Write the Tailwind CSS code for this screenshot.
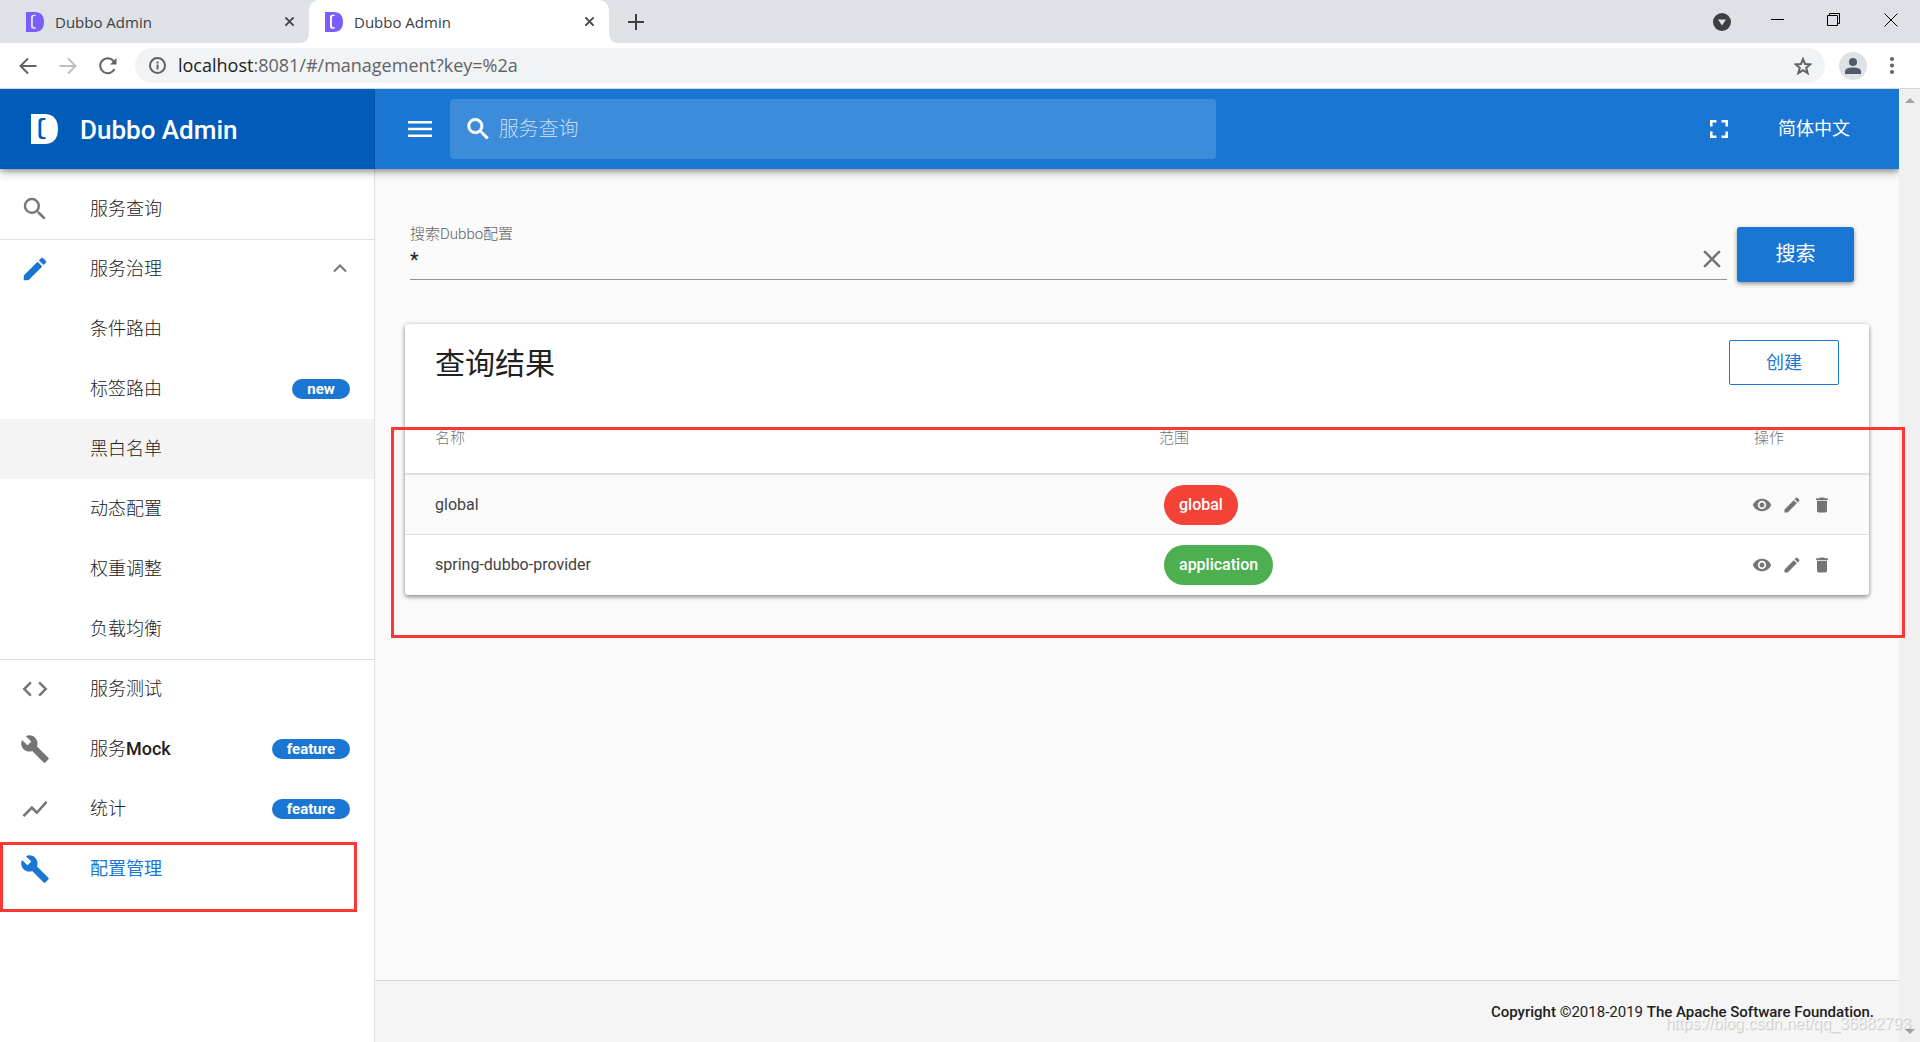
<!DOCTYPE html>
<html lang="zh-CN">
<head>
<meta charset="utf-8">
<title>Dubbo Admin</title>
<script src="https://cdn.jsdelivr.net/npm/@tailwindcss/browser@4"></script>
</head>
<body class="flex h-screen flex-col overflow-hidden bg-[#fafafa] font-['Roboto','Noto_Sans_CJK_SC',sans-serif] text-[#212121]">
<svg class="hidden">
  <symbol id="dubbo" viewBox="0 0 27 30"><path fill-rule="evenodd" d="M0 0H13C23 0 27 6 27 15S23 30 13 30H0ZM14.500 4H11Q7.500 4 7.500 8V21Q7.500 25 11 25H14.500V23H12.500Q10.300 23 10.300 20V9Q10.300 6 12.500 6H14.500Z"/></symbol>
  <symbol id="close" viewBox="0 0 24 24"><path d="M19 6.41L17.59 5 12 10.59 6.41 5 5 6.41 10.59 12 5 17.59 6.41 19 12 13.41 17.59 19 19 17.59 13.41 12z"/></symbol>
  <symbol id="search" viewBox="0 0 24 24"><path d="M15.5 14h-.79l-.28-.27A6.471 6.471 0 0 0 16 9.5 6.5 6.5 0 1 0 9.5 16c1.61 0 3.09-.59 4.23-1.57l.27.28v.79l5 4.99L20.49 19l-4.99-5zm-6 0C7.01 14 5 11.99 5 9.5S7.01 5 9.5 5 14 7.01 14 9.5 11.99 14 9.5 14z"/></symbol>
  <symbol id="edit" viewBox="0 0 24 24"><path d="M3 17.25V21h3.75L17.81 9.94l-3.75-3.75L3 17.25zM20.71 7.04c.39-.39.39-1.02 0-1.41l-2.34-2.34c-.39-.39-1.02-.39-1.41 0l-1.83 1.83 3.75 3.75 1.83-1.83z"/></symbol>
  <symbol id="build" viewBox="0 0 24 24"><path d="M22.7 19l-9.1-9.1c.9-2.3.4-5-1.5-6.9-2-2-5-2.4-7.4-1.3L9 6 6 9 1.6 4.7C.4 7.1.9 10.1 2.9 12.1c1.9 1.9 4.6 2.4 6.9 1.5l9.1 9.1c.4.4 1 .4 1.4 0l2.3-2.3c.5-.4.5-1.1.1-1.4z"/></symbol>
  <symbol id="eye" viewBox="0 0 24 24"><path d="M12 4.5C7 4.5 2.73 7.61 1 12c1.73 4.39 6 7.5 11 7.5s9.27-3.11 11-7.5c-1.73-4.39-6-7.5-11-7.5zM12 17c-2.76 0-5-2.24-5-5s2.24-5 5-5 5 2.24 5 5-2.24 5-5 5zm0-8c-1.66 0-3 1.34-3 3s1.34 3 3 3 3-1.34 3-3-1.34-3-3-3z"/></symbol>
  <symbol id="trash" viewBox="0 0 24 24"><path d="M6 19c0 1.1.9 2 2 2h8c1.1 0 2-.9 2-2V7H6v12zM19 4h-3.5l-1-1h-5l-1 1H5v2h14V4z"/></symbol>
</svg>

<!-- Browser tabs -->
<div class="flex h-[43px] shrink-0 items-center bg-[#dee1e6] font-['Open_Sans',sans-serif] text-[15px] text-[#3c4043]">
  <div class="flex h-full w-[309px] items-center pl-[26px] pr-3">
    <svg class="h-5 w-[18px] fill-[#7b5cff]"><use href="#dubbo"/></svg>
    <span class="ml-[11px] flex-1 pt-px">Dubbo Admin</span>
    <button aria-label="关闭"><svg class="size-[15px] fill-[#3c4043] stroke-[#3c4043]"><use href="#close"/></svg></button>
  </div>
  <div class="relative flex h-full w-[300px] items-center rounded-t-[10px] bg-white pl-4 pr-3">
    <svg class="absolute -left-[10px] bottom-0 size-[10px] fill-white" viewBox="0 0 10 10"><path d="M10 0V10H0Q10 10 10 0Z"/></svg>
    <svg class="absolute -right-[10px] bottom-0 size-[10px] fill-white" viewBox="0 0 10 10"><path d="M0 0V10H10Q0 10 0 0Z"/></svg>
    <svg class="h-5 w-[18px] fill-[#7b5cff]"><use href="#dubbo"/></svg>
    <span class="ml-[11px] flex-1 pt-px">Dubbo Admin</span>
    <button aria-label="关闭"><svg class="size-[15px] fill-[#3c4043] stroke-[#3c4043]"><use href="#close"/></svg></button>
  </div>
  <button aria-label="新标签页" class="ml-[19px]"><svg class="size-4 stroke-[#3c4043]" viewBox="0 0 16 16" stroke-width="2"><path d="M8 0V16M0 8H16"/></svg></button>
  <div class="ml-auto flex items-center pb-1 pr-[22px]">
    <svg class="mr-10 mt-1 size-[18px]" viewBox="0 0 18 18"><circle cx="9" cy="9" r="9" fill="#3c4043"/><path d="M5 6.500H13L9 12.500Z" fill="#dee1e6"/></svg>
    <svg class="mr-[43px] size-[13px] stroke-black" viewBox="0 0 13 13"><path d="M0 6.500H13"/></svg>
    <svg class="mr-[44px] size-[13px] fill-none stroke-black" viewBox="0 0 13 13"><path d="M.5 2.500H10.500V12.500H.5ZM2.500 2.500V.5H12.500V10.500H10.500"/></svg>
    <svg class="size-[14px] stroke-black" viewBox="0 0 14 14"><path d="M.5 .5L13.500 13.500M13.500 .5L.5 13.500"/></svg>
  </div>
</div>

<!-- Address bar -->
<div class="flex h-[46px] shrink-0 items-center border-b border-[#d5d7da] bg-white pl-[19px] pr-[26px] font-['Open_Sans',sans-serif]">
  <button aria-label="后退"><svg class="size-[18px] fill-none stroke-[#5f6368]" viewBox="0 0 18 18" stroke-width="2"><path d="M17.500 9H2M9 1.500L1.500 9L9 16.500"/></svg></button>
  <button aria-label="前进" class="ml-[22px]"><svg class="size-[18px] fill-none stroke-[#bbbdc0]" viewBox="0 0 18 18" stroke-width="2"><path d="M.5 9H16M9 1.500L16.500 9L9 16.500"/></svg></button>
  <button aria-label="刷新" class="ml-[22px]"><svg class="size-[18px] fill-none stroke-[#5f6368]" viewBox="0 0 18 18" stroke-width="2"><path d="M15.500 12A7.500 7.500 0 1 1 14.500 4L16 5.500"/><path d="M17.500 1V7.500H11Z" fill="#5f6368" stroke="none"/></svg></button>
  <div class="ml-[18px] flex h-[35px] flex-1 items-center rounded-full bg-[#f1f3f4] pl-[14px] pr-[13px]">
    <svg class="size-[17px] fill-none stroke-[#5f6368]" viewBox="0 0 17 17" stroke-width="2"><circle cx="8.500" cy="8.500" r="7.500"/><path d="M8.500 7.500V12.500M8.500 4.500V6.500"/></svg>
    <a href="#" class="ml-3 flex-1 pb-0.5 text-lg leading-6 text-[#5f6368]"><span class="text-[#202124]">localhost</span>:8081/#/management?key=%2a</a>
    <svg class="size-[18px] fill-none stroke-[#5f6368]" viewBox="0 0 18 18" stroke-width="2"><path d="M9 2L11 7L16.500 7.300L12.200 10.800L13.700 16.200L9 13.100L4.300 16.200L5.800 10.800L1.500 7.300L7 7Z"/></svg>
  </div>
  <svg class="ml-[14px] size-7" viewBox="0 0 28 28"><circle cx="14" cy="14" r="14" fill="#dee1e6"/><g fill="#4f5b6b"><circle cx="14" cy="10" r="4"/><path d="M6 22V19.500Q6 15.500 14 15.500T22 19.500V22Z"/></g></svg>
  <svg class="ml-[23px] h-[17px] w-1 fill-[#5f6368]" viewBox="0 0 4 17"><circle cx="2" cy="2" r="2"/><circle cx="2" cy="8.500" r="2"/><circle cx="2" cy="15" r="2"/></svg>
</div>

<div class="flex min-h-0 flex-1">
  <div class="flex min-w-0 flex-1 flex-col overflow-hidden">
    <!-- Application bar -->
    <header class="z-10 flex h-20 shrink-0 bg-[#1976d2] text-white shadow-[0_2px_5px_0_rgba(0,0,0,0.3),0_4px_10px_0_rgba(0,0,0,0.2)]">
      <div class="flex w-[375px] items-center border-r border-[#0052a3] bg-[#005cb7] pl-[31px]">
        <svg class="h-[30px] w-[27px] fill-white"><use href="#dubbo"/></svg>
        <h1 class="ml-[22px] pt-0.5 text-[26px] font-medium">Dubbo Admin</h1>
      </div>
      <div class="flex flex-1 items-center pl-[33px] pr-[49px]">
        <button aria-label="菜单"><svg class="h-4 w-6 fill-white" viewBox="0 0 24 16"><path d="M0 0H24V2.600H0ZM0 6.700H24V9.300H0ZM0 13.400H24V16H0Z"/></svg></button>
        <label class="ml-[18px] flex h-[60px] max-w-[766px] flex-1 items-center rounded bg-white/16 pl-[14px]">
          <svg class="size-[30px] fill-white stroke-white" stroke-width="0.5"><use href="#search"/></svg>
          <input type="text" aria-label="服务查询" placeholder="服务查询" class="ml-[6px] w-full bg-transparent text-xl font-light outline-none placeholder:text-white/70">
        </label>
        <button aria-label="全屏" class="ml-auto"><svg class="size-[18px] fill-white" viewBox="0 0 14 14"><path d="M2 9H0v5h5v-2H2V9zM0 5h2V2h3V0H0v5zm12 7H9v2h5V9h-2v3zM9 0v2h3v3h2V0H9z"/></svg></button>
        <button class="ml-[50px] text-lg">简体中文</button>
      </div>
    </header>

    <div class="flex min-h-0 flex-1">
      <!-- Navigation drawer -->
      <nav class="relative w-[375px] shrink-0 border-r border-[#e0e0e0] bg-white pt-[10px] text-lg font-light">
        <a href="#" class="flex h-[60px] items-center pl-5"><svg class="size-[30px] fill-[#757575]"><use href="#search"/></svg><span class="ml-10">服务查询</span></a>
        <a href="#" class="flex h-[60px] items-center pl-5 pr-5 shadow-[inset_0_1px_0_#e0e0e0]"><svg class="size-[30px] fill-[#1976d2]"><use href="#edit"/></svg><span class="ml-10 flex-1">服务治理</span><svg class="mr-[7px] mb-0.5 h-2 w-[14px] fill-none stroke-[#757575]" viewBox="0 0 14 8" stroke-width="2"><path d="M1 7.500L7 1.500L13 7.500"/></svg></a>
        <a href="#" class="flex h-[60px] items-center pl-[90px]">条件路由</a>
        <a href="#" class="flex h-[60px] items-center justify-between pl-[90px] pr-6">标签路由<span class="flex h-5 w-[58px] items-center justify-center rounded-full bg-[#1976d2] pt-px text-[15px] font-bold text-white">new</span></a>
        <a href="#" class="flex h-[60px] items-center bg-[#f4f4f4] pl-[90px]">黑白名单</a>
        <a href="#" class="flex h-[60px] items-center pl-[90px]">动态配置</a>
        <a href="#" class="flex h-[60px] items-center pl-[90px]">权重调整</a>
        <a href="#" class="flex h-[60px] items-center pl-[90px]">负载均衡</a>
        <a href="#" class="flex h-[60px] items-center pl-5 shadow-[inset_0_1px_0_#e0e0e0]"><svg class="size-[30px] fill-[#757575]" viewBox="0 0 24 24"><path d="M9.400 16.600L4.800 12l4.600-4.600L8 6l-6 6 6 6 1.400-1.400zm5.200 0l4.600-4.600-4.600-4.600L16 6l6 6-6 6-1.400-1.400z"/></svg><span class="ml-10">服务测试</span></a>
        <a href="#" class="flex h-[60px] items-center pl-5 pr-6"><svg class="size-[30px] fill-[#757575]"><use href="#build"/></svg><span class="ml-10 flex-1">服务<span class="font-medium">Mock</span></span><span class="flex h-5 w-[78px] items-center justify-center rounded-full bg-[#1976d2] pt-px text-[15px] font-bold text-white">feature</span></a>
        <a href="#" class="flex h-[60px] items-center pl-5 pr-6"><svg class="size-[30px] fill-[#757575]" viewBox="0 0 24 24"><path d="M3.500 18.490l6-6.010 4 4L22 6.920l-1.410-1.410-7.090 7.970-4-4L2 16.990z"/></svg><span class="ml-10 flex-1">统计</span><span class="flex h-5 w-[78px] items-center justify-center rounded-full bg-[#1976d2] pt-px text-[15px] font-bold text-white">feature</span></a>
        <a href="#" class="relative flex h-[60px] items-center pl-5 font-normal text-[#1976d2]"><svg class="size-[30px] fill-[#1976d2]"><use href="#build"/></svg><span class="ml-10">配置管理</span><span class="absolute -bottom-[13px] left-0 right-[17px] top-[3px] border-3 border-[#fd3636]"></span></a>
      </nav>

      <div class="flex min-w-0 flex-1 flex-col">
        <main class="flex-1 pl-[30px] pr-[30px] pt-[54px]">
          <form class="flex items-start pl-[5px] pr-[15px]">
            <div class="flex h-[57px] flex-1 items-end border-b border-[#949494]">
              <div class="flex flex-1 flex-col">
                <label for="key" class="text-[15px] leading-5 font-light text-[#616161]">搜索Dubbo配置</label>
                <input id="key" type="text" value="*" class="h-[35px] w-full bg-transparent pb-1 text-xl outline-none">
              </div>
              <button type="button" aria-label="清除" class="mb-[5px]"><svg class="size-[30px] fill-[#757575]" viewBox="0 0 24 24"><use href="#close"/></svg></button>
            </div>
            <button type="submit" class="ml-[10px] mt-1 h-[55px] w-[117px] rounded-[3px] bg-[#1976d2] pb-0.5 text-xl text-white shadow-[0_2px_4px_rgba(0,0,0,0.4)]">搜索</button>
          </form>

          <section class="relative mt-[42px] rounded-[3px] bg-white shadow-[0_2px_4px_rgba(0,0,0,0.4),0_0_5px_rgba(0,0,0,0.12)]">
            <div class="flex h-[77px] items-center justify-between pl-[30px] pr-[30px]">
              <h2 class="pt-0.5 text-3xl">查询结果</h2>
              <button class="h-[45px] w-[110px] rounded-[2px] border border-[#1976d2] text-lg text-[#1976d2]">创建</button>
            </div>
            <table class="w-full table-fixed border-separate border-spacing-0 text-left text-base text-[#424242]">
              <thead><tr class="h-[74px] text-[15px] text-[#757575] *:border-b-2 *:border-[#e0e0e0] *:pt-0.5 *:font-light">
                <th class="pl-[30px]">名称</th><th class="w-[595px]">范围</th><th class="w-[115px]">操作</th>
              </tr></thead>
              <tbody>
                <tr class="h-[60px] bg-[#fafafa] *:border-b *:border-[#e0e0e0]">
                  <td class="pl-[30px]">global</td>
                  <td><span class="ml-[5px] inline-flex h-10 items-center rounded-full bg-[#f44336] px-[15px] align-middle font-medium text-white">global</span></td>
                  <td><div class="-ml-0.5 flex gap-[10px]"><button aria-label="查看"><svg class="size-5 fill-[#757575]"><use href="#eye"/></svg></button><button aria-label="编辑"><svg class="size-5 fill-[#757575]"><use href="#edit"/></svg></button><button aria-label="删除"><svg class="size-5 fill-[#757575]"><use href="#trash"/></svg></button></div></td>
                </tr>
                <tr class="h-[60px]">
                  <td class="pl-[30px]">spring-dubbo-provider</td>
                  <td><span class="ml-[5px] inline-flex h-10 items-center rounded-full bg-[#4caf50] px-[15px] align-middle font-medium text-white">application</span></td>
                  <td><div class="-ml-0.5 flex gap-[10px]"><button aria-label="查看"><svg class="size-5 fill-[#757575]"><use href="#eye"/></svg></button><button aria-label="编辑"><svg class="size-5 fill-[#757575]"><use href="#edit"/></svg></button><button aria-label="删除"><svg class="size-5 fill-[#757575]"><use href="#trash"/></svg></button></div></td>
                </tr>
              </tbody>
            </table>
          </section>
        </main>
        <footer class="flex h-[62px] items-center justify-end border-t border-[#d8d8d8] bg-[#f5f5f5] pr-[25px] pt-0.5 text-[15px]">
          <p><span class="font-medium">Copyright</span> ©2018-2019 <span class="font-medium">The Apache Software Foundation.</span></p>
        </footer>
      </div>
    </div>
  </div>

  <!-- Window scrollbar -->
  <div class="flex w-[21px] flex-col items-center justify-between bg-[#f0f0f0] pb-2 pt-[9px]">
    <svg class="h-[5px] w-[10px] fill-[#a3a3a3]" viewBox="0 0 10 5"><path d="M0 5L5 0L10 5Z"/></svg>
    <svg class="h-[5px] w-[10px] fill-[#a3a3a3]" viewBox="0 0 10 5"><path d="M0 0L5 5L10 0Z"/></svg>
  </div>
</div>

<!-- Overlays: highlight frame and watermark -->
<div class="pointer-events-none absolute left-[391px] right-[15px] top-[427px] z-20 h-[211px] border-3 border-[#fd3636]"></div>
<div class="pointer-events-none absolute bottom-1.5 right-[9px] z-20 font-['Liberation_Sans',sans-serif] text-base text-white/60 [text-shadow:1px_1px_1px_rgba(0,0,0,0.2)]">https://blog.csdn.net/qq_36882793</div>
</body>
</html>
